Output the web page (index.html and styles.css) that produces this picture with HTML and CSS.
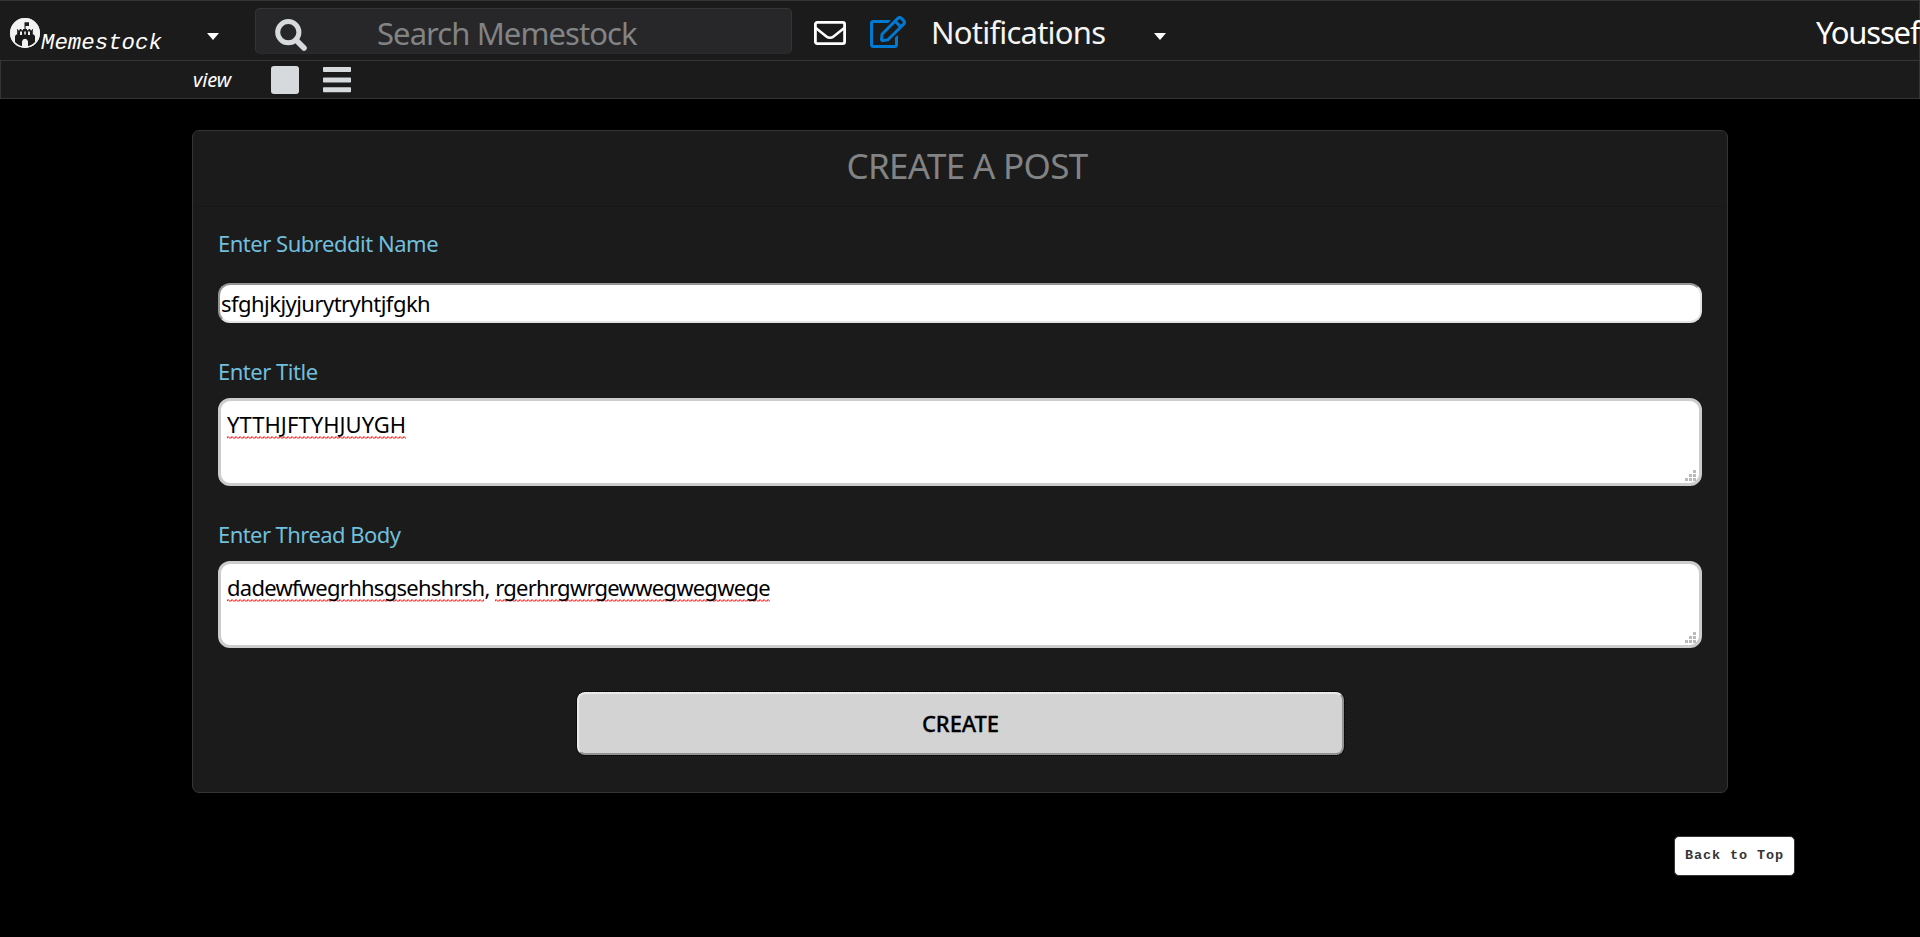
FILE: index.html
```html
<!DOCTYPE html>
<html lang="en">
<head>
<meta charset="utf-8">
<title>Memestock</title>
<link rel="stylesheet" href="styles.css">
</head>
<body>
<header class="navbar">
  <a class="brand">
    <svg class="logo" viewBox="0 0 30 30">
      <circle cx="15" cy="15" r="15" fill="#f2f2f2"/>
      <path fill="#1b1b1b" d="M14.5 4.300H19V8H15.600V11H17V12.300H18.500V11H20.300V12.300H22V11H22.800V16.500H24V17.500H25V25L19 28.500H18V23.500Q17.500 20.800 15 20.800Q12.500 20.800 12 23.500V28.500H11L5 25V17.500H6V16.500H7.200V11H8V12.300H9.700V11H11.500V12.300H13V11H14.500Z"/>
      <path fill="#f2f2f2" d="M10 13.500H12V17H10ZM18 13.500H20V17H18ZM14.200 13.500H15.800V16.500H14.200Z"/>
      <circle cx="15" cy="15" r="14.200" fill="none" stroke="#f2f2f2" stroke-width="1.500"/>
    </svg>
    <span class="brand-name">Memestock</span>
  </a>
  <i class="caret caret-brand"></i>
  <div class="search">
    <svg class="search-icon" viewBox="0 0 32 32"><circle cx="13.3" cy="13.2" r="10.6" fill="none" stroke="#d7dadc" stroke-width="5"/><path d="M21 21L29 29" stroke="#d7dadc" stroke-width="5.6" stroke-linecap="round"/></svg>
    <span class="placeholder">Search Memestock</span>
  </div>
  <svg class="mail" viewBox="0 0 32 24"><rect x="1.4" y="1.4" width="29.2" height="21.2" rx="1.8" fill="none" stroke="#fff" stroke-width="2.8"/><path d="M1.5 6.7L12.4 15.4Q16 18.2 19.6 15.4L30.5 6.7" fill="none" stroke="#fff" stroke-width="2.5"/></svg>
  <svg class="edit" viewBox="0 0 576 512"><path fill="#0079d3" d="M402.300 344.900l32-32c5-5 13.700-1.500 13.700 5.700V464c0 26.500-21.500 48-48 48H48c-26.500 0-48-21.500-48-48V112c0-26.500 21.500-48 48-48h273.500c7.100 0 10.700 8.600 5.700 13.700l-32 32c-1.500 1.500-3.500 2.300-5.700 2.300H48v352h352V350.500c0-2.100.8-4.100 2.300-5.600zm156.600-201.800L296.300 405.700l-90.400 10c-26.200 2.900-48.500-19.200-45.600-45.600l10-90.400L432.900 17.100c22.900-22.900 59.900-22.900 82.700 0l43.200 43.200c22.900 22.900 22.900 60 .1 82.800zM460.100 174L402 115.900 216.200 301.800l-7.300 65.300 65.300-7.300L460.100 174zm64.800-79.700l-43.200-43.200c-4.100-4.100-10.800-4.100-14.800 0L436 82l58.100 58.100 30.900-30.900c4-4.200 4-10.800-.1-14.900z"/></svg>
  <span class="notifications">Notifications</span>
  <i class="caret caret-notify"></i>
  <span class="user">Youssef</span>
</header>
<nav class="viewbar">
  <span class="view-label">view</span>
  <svg class="view-icon" viewBox="0 0 28 28"><rect width="28" height="28" rx="3" fill="#d7dadc"/></svg>
  <svg class="view-icon" viewBox="0 0 28 28"><path fill="#d7dadc" d="M.8 1H27.200Q28 1 28 1.800V5.200Q28 6 27.200 6H.8Q0 6 0 5.200V1.800Q0 1 .8 1ZM.8 11.500H27.200Q28 11.500 28 12.300V15.700Q28 16.500 27.200 16.500H.8Q0 16.500 0 15.700V12.300Q0 11.500 .8 11.500ZM.8 21.300H27.200Q28 21.300 28 22.100V25.300Q28 26.200 27.200 26.200H.8Q0 26.200 0 25.300V22.100Q0 21.300 .8 21.300Z"/></svg>
</nav>
<main class="card">
  <h1 class="card-title">CREATE A POST</h1>
  <form class="form">
    <label class="label">Enter Subreddit Name</label>
    <div class="input"><span class="value-name">sfghjkjyjurytryhtjfgkh</span></div>
    <label class="label label-title">Enter Title</label>
    <div class="area area-title">
      <span class="misspelled value-title">YTTHJFTYHJUYGH</span>
      <svg class="grip" viewBox="0 0 11 11"><path fill="#bbb" d="M8 0h3v3h-3zM4 4h3v3h-3zM8 4h3v3h-3zM0 8h3v3h-3zM4 8h3v3h-3zM8 8h3v3h-3z"/></svg>
    </div>
    <label class="label label-body">Enter Thread Body</label>
    <div class="area area-body">
      <span class="misspelled">dadewfwegrhhsgsehshrsh</span>, <span class="misspelled">rgerhrgwrgewwegwegwege</span>
      <svg class="grip" viewBox="0 0 11 11"><path fill="#bbb" d="M8 0h3v3h-3zM4 4h3v3h-3zM8 4h3v3h-3zM0 8h3v3h-3zM4 8h3v3h-3zM8 8h3v3h-3z"/></svg>
    </div>
    <button class="create" type="button">CREATE</button>
  </form>
</main>
<button class="back-to-top" type="button">Back to Top</button>
</body>
</html>
```
FILE: styles.css
```css
* { box-sizing: border-box; }

body {
  margin: 0;
  height: 937px;
  overflow: hidden;
  background: #000;
  color: #000;
  font-family: "Noto Sans", "Open Sans", sans-serif;
  display: flex;
  flex-direction: column;
}

svg { display: block; flex: none; }

.navbar {
  height: 60px;
  flex: none;
  display: flex;
  align-items: flex-start;
  background: #1b1b1b;
  border: 1px solid #343536;
  border-bottom: 0;
  border-left: 0;
  color: #fff;
  font-size: 31px;
  line-height: 44px;
  white-space: nowrap;
}

.brand { display: flex; width: 161px; padding-left: 10px; }
.logo { width: 30px; height: 30px; margin-top: 17px; }
.brand-name {
  margin: 28px 0 0 1px;
  font: italic 22.4px/28px "Courier New", "Liberation Mono", monospace;
}

.caret {
  flex: none;
  border: 6px solid transparent;
  border-top: 7px solid #fff;
  border-bottom: 0;
  margin-top: 32px;
}
.caret-brand { margin-left: 46px; }
.caret-notify { margin-left: 49px; }

.search {
  width: 537px;
  height: 46px;
  flex: none;
  margin: 7px 0 0 36px;
  display: flex;
  background: #272729;
  border: 1px solid #343536;
  border-bottom-color: #2a2a2c;
  border-radius: 5px;
}
.search-icon { width: 32px; height: 32px; margin: 10px 0 0 19px; }
.placeholder {
  margin: 2px 0 0 70px;
  color: #818384;
  letter-spacing: -0.93px;
}
.mail { width: 32px; height: 24px; margin: 20px 0 0 22px; }
.edit { width: 36px; height: 32px; margin: 15px 0 0 24px; }
.notifications { margin: 9px 0 0 25px; letter-spacing: -0.78px; color: #f4f4f4; }
.user { width: 103px; margin: 9px 0 0 auto; letter-spacing: -1.2px; }

.viewbar {
  height: 39px;
  flex: none;
  display: flex;
  align-items: flex-start;
  padding: 5px 0 0 192px;
  background: #1b1b1b;
  border: 1px solid #343536;
}
.view-label {
  width: 78px;
  color: #fff;
  font-style: italic;
  font-size: 20px;
  line-height: 27px;
  letter-spacing: -0.1px;
}
.view-icon { width: 28px; height: 28px; margin-right: 24px; }

.card {
  width: 1536px;
  height: 663px;
  flex: none;
  margin: 31px 0 0 192px;
  background: #1b1b1b;
  border: 1px solid #343536;
  border-radius: 7px;
}
.card-title {
  height: 76px;
  margin: 0;
  padding: 10px 0 0 14px;
  border-bottom: 1px solid #171717;
  color: #818384;
  font-size: 35px;
  font-weight: 400;
  line-height: 50px;
  letter-spacing: -0.7px;
  text-align: center;
}
.form {
  display: flex;
  flex-direction: column;
  padding: 21px 25px 0;
  font-size: 22px;
  line-height: 30px;
}
.label { height: 30px; color: #70bfdc; letter-spacing: -0.48px; }
.input {
  height: 40px;
  margin-top: 25px;
  padding: 3px 1px;
  background: #fff;
  border: 2px solid;
  border-color: #949494 #e3e3e3 #e3e3e3 #949494;
  border-radius: 12px;
}
.value-name { letter-spacing: -0.54px; }
.label-title { margin-top: 33px; }
.label-body { margin-top: 33px; letter-spacing: -0.56px; }
.area {
  position: relative;
  padding: 8px 6px;
  background: #fff;
  border: 3px solid #ccc;
  border-radius: 12px;
  letter-spacing: -0.74px;
  word-spacing: 0.6px;
}
.area-title { height: 88px; margin-top: 12px; }
.area-body { height: 87px; margin-top: 12px; }
.value-title { letter-spacing: 0.05px; }
.misspelled {
  background: url("data:image/svg+xml,%3Csvg xmlns='http://www.w3.org/2000/svg' width='4' height='3'%3E%3Cpath d='M-1 3.500L1 .500L3 2.500L5 .500' fill='none' stroke='red' stroke-width='1'/%3E%3C/svg%3E") repeat-x 0 100%;
}
.grip { position: absolute; right: 3px; bottom: 2px; width: 11px; height: 11px; }

.create {
  width: 767px;
  height: 63px;
  align-self: center;
  margin: 44px 0 0 1px;
  padding: 0 0 1px;
  background: #d3d3d3;
  border: 2px solid;
  border-color: #e9e9e9 #929292 #929292 #e9e9e9;
  border-radius: 8px;
  outline: 1px dotted #000;
  color: #000;
  font: 500 22px/30px "Noto Sans", "Open Sans", sans-serif;
  letter-spacing: -0.1px;
  -webkit-text-stroke: 0.3px #000;
}

.back-to-top {
  width: 121px;
  height: 40px;
  margin: 43px 0 0 1674px;
  padding: 0 0 1px;
  background: #fff;
  border: 1px solid #343536;
  border-radius: 5px;
  color: #343536;
  font: bold 13.5px/20px "Courier New", "Liberation Mono", monospace;
  letter-spacing: 0.9px;
}
```
